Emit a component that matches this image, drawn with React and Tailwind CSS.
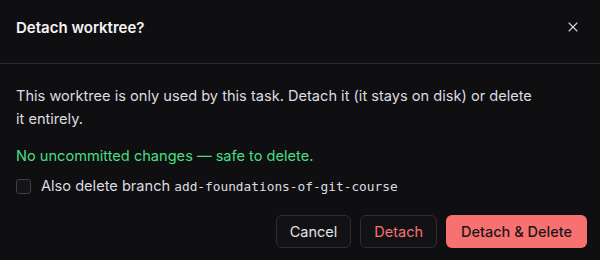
import { X } from "lucide-react";

export default function App() {
  return (
    <div className="w-[600px] h-[260px] bg-[#0f0f12] text-[#e4e4e7] font-['Inter',sans-serif] flex flex-col overflow-hidden">
      <div className="h-16 px-4 pt-4 flex items-start justify-between border-b border-[#2a2a2f]">
        <h2 className="text-[15px] leading-6 font-semibold text-[#f4f4f5]">Detach worktree?</h2>
        <button className="w-6 h-6 mr-[-1px] -mt-[1px] flex items-center justify-center text-[#d4d4d8]">
          <X size={16} strokeWidth={1.6} />
        </button>
      </div>

      <div className="px-4 pt-[21px] flex flex-col">
        <p className="max-w-[524px] text-[14.6px] leading-[23px] text-[#dcdce0]">
          This worktree is only used by this task. Detach it (it stays on disk) or delete it entirely.
        </p>
        <p className="mt-[14px] text-[14.6px] leading-[23px] text-[#4ade80]">
          No uncommitted changes — safe to delete.
        </p>
        <label className="mt-[7px] flex items-center gap-[10px] text-[14.6px] leading-[23px] text-[#dcdce0]">
          <span className="w-[15px] h-[15px] rounded-[3px] border border-[#3f3f46] bg-[#141417]" />
          <span>
            Also delete branch{" "}
            <code className="font-['DejaVu_Sans_Mono',monospace] text-[12.8px]">add-foundations-of-git-course</code>
          </span>
        </label>
      </div>

      <div className="mt-auto mb-3 px-[13px] flex justify-end gap-[9px]">
        <button className="h-[33px] px-[13px] rounded-md border border-[#2e2e33] bg-[#121215] text-[14.5px] text-[#e4e4e7]">
          Cancel
        </button>
        <button className="h-[33px] px-[13px] rounded-md border border-[#2e2e33] bg-[#121215] text-[14.5px] text-[#f87171]">
          Detach
        </button>
        <button className="h-[33px] px-[15px] rounded-md bg-[#f87171] text-[14.5px] font-medium text-[#18181b]">
          Detach &amp; Delete
        </button>
      </div>
    </div>
  );
}
